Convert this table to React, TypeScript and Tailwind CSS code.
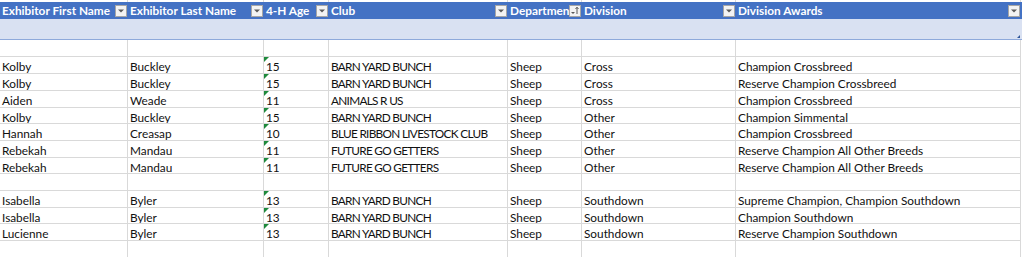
import React from "react";

const cols = [
  "w-[128px]",
  "w-[136px]",
  "w-[65px]",
  "w-[179px]",
  "w-[74px]",
  "w-[154px]",
  "w-[285px]",
];

const headers = [
  "Exhibitor First Name",
  "Exhibitor Last Name",
  "4-H Age",
  "Club",
  "Department",
  "Division",
  "Division Awards",
];

type Row = string[] | null;

const rows: Row[] = [
  null,
  ["Kolby", "Buckley", "15", "BARN YARD BUNCH", "Sheep", "Cross", "Champion Crossbreed"],
  ["Kolby", "Buckley", "15", "BARN YARD BUNCH", "Sheep", "Cross", "Reserve Champion Crossbreed"],
  ["Aiden", "Weade", "11", "ANIMALS R US", "Sheep", "Cross", "Champion Crossbreed"],
  ["Kolby", "Buckley", "15", "BARN YARD BUNCH", "Sheep", "Other", "Champion Simmental"],
  ["Hannah", "Creasap", "10", "BLUE RIBBON LIVESTOCK CLUB", "Sheep", "Other", "Champion Crossbreed"],
  ["Rebekah", "Mandau", "11", "FUTURE GO GETTERS", "Sheep", "Other", "Reserve Champion All Other Breeds"],
  ["Rebekah", "Mandau", "11", "FUTURE GO GETTERS", "Sheep", "Other", "Reserve Champion All Other Breeds"],
  null,
  ["Isabella", "Byler", "13", "BARN YARD BUNCH", "Sheep", "Southdown", "Supreme Champion, Champion Southdown"],
  ["Isabella", "Byler", "13", "BARN YARD BUNCH", "Sheep", "Southdown", "Champion Southdown"],
  ["Lucienne", "Byler", "13", "BARN YARD BUNCH", "Sheep", "Southdown", "Reserve Champion Southdown"],
  null,
];

// row heights that add up to the 16.7px rows of the sheet
const tall = [true, true, true, true, false, true, true, false, true, true, false, true, true];

const FilterButton = ({ sorted }: { sorted?: boolean }) => (
  <span className="absolute right-[1px] top-[3px] flex h-[12px] w-[12px] items-center justify-center border border-[#a6a6a6] bg-[#f3f3f3]">
    {sorted ? (
      <svg width="10" height="10" viewBox="0 0 10 10">
        <path d="M1 6 L5 6 L3 8 Z" fill="#595959" />
        <path d="M7 1.5 V8" stroke="#595959" strokeWidth="1" />
        <path d="M5.5 3 L7 1.2 L8.5 3" stroke="#595959" strokeWidth="1" fill="none" />
      </svg>
    ) : (
      <svg width="8" height="6" viewBox="0 0 8 6">
        <path d="M1 1.5 L7 1.5 L4 4.5 Z" fill="#595959" />
      </svg>
    )}
  </span>
);

export default function App() {
  return (
    <div className="h-[257px] w-[1023px] overflow-hidden bg-white text-[11.8px] text-[#111] [font-family:Lato,'Open_Sans',sans-serif]">
      {/* strip above header */}
      <div className="flex h-[2px]">
        {cols.map((c, i) => (
          <div key={i} className={`${c} border-r border-[#d9d9d9]`} />
        ))}
      </div>

      {/* header row */}
      <div className="flex h-[17px] w-[1022px] bg-[#4472c4]">
        {headers.map((h, i) => (
          <div key={i} className={`${cols[i]} relative overflow-hidden whitespace-nowrap pl-[2px] font-bold leading-[18px] text-white`}>
            {h}
            <FilterButton sorted={i === 4} />
          </div>
        ))}
      </div>

      {/* banded empty row */}
      <div className="relative h-[21px] w-[1022px] border-b border-[#8ea9db] bg-[#d9e1f2]">
        <span className="absolute bottom-[1px] right-[2px] h-[3px] w-[3px] bg-[#2f5597] [clip-path:polygon(100%_0,100%_100%,0_100%)]" />
      </div>

      {rows.map((r, ri) => (
        <div key={ri} className={`flex ${tall[ri] ? "h-[17px]" : "h-[16px]"}`}>
          {cols.map((c, ci) => (
            <div
              key={ci}
              className={`${c} relative overflow-hidden whitespace-nowrap border-b border-r border-[#d9d9d9] pl-[2px] pt-[2px] leading-[15px] ${ci === 3 ? "tracking-[-0.7px]" : ""}`}
            >
              {r && ci === 2 && (
                <span className="absolute left-0 top-0 h-[5px] w-[5px] bg-[#1e8a3c] [clip-path:polygon(0_0,100%_0,0_100%)]" />
              )}
              {r ? r[ci] : ""}
            </div>
          ))}
        </div>
      ))}
    </div>
  );
}
